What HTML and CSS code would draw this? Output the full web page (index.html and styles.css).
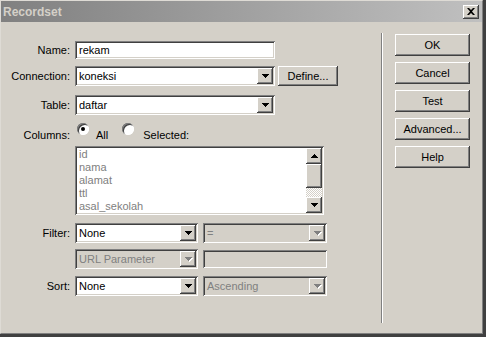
FILE: index.html
```html
<!DOCTYPE html>
<html lang="en">
<head>
  <meta charset="UTF-8" />
  <title>Recordset</title>
  <link rel="stylesheet" href="styles.css">
</head>
<body>
  <div class="window">
    <div class="frame">
      <div class="titlebar">
        <span class="title">Recordset</span>
        <span class="close">
          <svg width="8" height="7" viewBox="0 0 8 7"><path d="M0 0H2L4 2L6 0H8L5 3.5L8 7H6L4 5L2 7H0L3 3.5Z" fill="#000"/></svg>
        </span>
      </div>

      <div class="content">
        <div class="form">
          <div class="row row-name">
            <span class="label">Name:</span>
            <div class="field w-wide"><span class="value">rekam</span></div>
          </div>

          <div class="row row-conn">
            <span class="label">Connection:</span>
            <div class="combo w-wide">
              <span class="value">koneksi</span>
              <span class="drop"><svg width="7" height="4"><path d="M0 0H7V1H6V2H5V3H4V4H3V3H2V2H1V1H0Z"/></svg></span>
            </div>
            <button class="btn define">Define...</button>
          </div>

          <div class="row row-table">
            <span class="label">Table:</span>
            <div class="combo w-wide">
              <span class="value">daftar</span>
              <span class="drop"><svg width="7" height="4"><path d="M0 0H7V1H6V2H5V3H4V4H3V3H2V2H1V1H0Z"/></svg></span>
            </div>
          </div>

          <div class="row row-columns">
            <span class="label">Columns:</span>
            <span class="radio checked"></span>
            <span class="radio-text text-all">All</span>
            <span class="radio"></span>
            <span class="radio-text">Selected:</span>
          </div>

          <div class="row row-list">
            <span class="label"></span>
            <div class="listbox">
              <div class="list-items">
                <div>id</div>
                <div>nama</div>
                <div>alamat</div>
                <div>ttl</div>
                <div>asal_sekolah</div>
              </div>
              <div class="scrollbar">
                <span class="sb-btn"><svg width="7" height="4"><path d="M3 0H4V1H5V2H6V3H7V4H0V3H1V2H2V1H3Z"/></svg></span>
                <span class="sb-thumb"></span>
                <span class="sb-track"></span>
                <span class="sb-btn"><svg width="7" height="4"><path d="M0 0H7V1H6V2H5V3H4V4H3V3H2V2H1V1H0Z"/></svg></span>
              </div>
            </div>
          </div>

          <div class="row row-filter">
            <span class="label">Filter:</span>
            <div class="combo w-half">
              <span class="value">None</span>
              <span class="drop"><svg width="7" height="4"><path d="M0 0H7V1H6V2H5V3H4V4H3V3H2V2H1V1H0Z"/></svg></span>
            </div>
            <div class="combo w-half2 disabled">
              <span class="value">=</span>
              <span class="drop"><svg width="8" height="5"><path class="hl" d="M1 1H8V2H7V3H6V4H5V5H4V4H3V3H2V2H1Z"/><path d="M0 0H7V1H6V2H5V3H4V4H3V3H2V2H1V1H0Z"/></svg></span>
            </div>
          </div>

          <div class="row row-param">
            <span class="label"></span>
            <div class="combo w-half disabled">
              <span class="value">URL Parameter</span>
              <span class="drop"><svg width="8" height="5"><path class="hl" d="M1 1H8V2H7V3H6V4H5V5H4V4H3V3H2V2H1Z"/><path d="M0 0H7V1H6V2H5V3H4V4H3V3H2V2H1V1H0Z"/></svg></span>
            </div>
            <div class="field w-half2 disabled"><span class="value"></span></div>
          </div>

          <div class="row row-sort">
            <span class="label">Sort:</span>
            <div class="combo w-half">
              <span class="value">None</span>
              <span class="drop"><svg width="7" height="4"><path d="M0 0H7V1H6V2H5V3H4V4H3V3H2V2H1V1H0Z"/></svg></span>
            </div>
            <div class="combo w-half2 disabled">
              <span class="value">Ascending</span>
              <span class="drop"><svg width="8" height="5"><path class="hl" d="M1 1H8V2H7V3H6V4H5V5H4V4H3V3H2V2H1Z"/><path d="M0 0H7V1H6V2H5V3H4V4H3V3H2V2H1V1H0Z"/></svg></span>
            </div>
          </div>
        </div>

        <div class="divider"></div>

        <div class="actions">
          <button class="btn">OK</button>
          <button class="btn">Cancel</button>
          <button class="btn">Test</button>
          <button class="btn">Advanced...</button>
          <button class="btn">Help</button>
        </div>
      </div>
    </div>
  </div>
</body>
</html>
```

FILE: styles.css
```css
body {
  margin: 0;
  font-family: "Liberation Sans", Arial, sans-serif;
  font-size: 11px;
  color: #000;
  background: #fff;
}

.window {
  width: 486px;
  height: 337px;
  box-sizing: border-box;
  border-right: 3px solid #404040;
  border-bottom: 3px solid #404040;
  background: #d4d0c8;
}

.frame {
  height: 100%;
  box-sizing: border-box;
  border-top: 1px solid #dedbd5;
  border-left: 1px solid #dedbd5;
  border-right: 1px solid #808080;
  border-bottom: 1px solid #808080;
  display: flex;
  flex-direction: column;
}

/* title bar */
.titlebar {
  height: 21px;
  flex-shrink: 0;
  display: flex;
  align-items: center;
  justify-content: space-between;
  padding: 0 3px 0 2px;
  background: linear-gradient(to right, #808080, #c0c0c0);
}

.title {
  font-weight: bold;
  font-size: 12px;
  color: #d4d0c8;
}

.close {
  width: 16px;
  height: 14px;
  display: flex;
  align-items: center;
  justify-content: center;
  background: #d4d0c8;
  box-shadow: inset -1px -1px #404040, inset 1px 1px #fff, inset -2px -2px #808080;
}

/* body */
.content {
  flex: 1;
  display: flex;
}

.form {
  width: 380px;
  padding-top: 19px;
}

.row {
  display: flex;
  align-items: center;
}

.label {
  width: 69px;
  margin-right: 5px;
  text-align: right;
  flex-shrink: 0;
}

.row-conn { margin-top: 7px; }
.row-table { margin-top: 9px; }
.row-columns { margin-top: 8px; height: 17px; align-items: flex-start; }
.row-list { margin-top: 6px; align-items: flex-start; }
.row-filter { margin-top: 8px; }
.row-param { margin-top: 6px; }
.row-sort { margin-top: 7px; }

.row-columns .label,
.row-columns .radio-text {
  padding-top: 6px;
  line-height: 13px;
}

/* sunken controls */
.field,
.combo,
.listbox {
  box-sizing: border-box;
  background: #fff;
  padding: 2px;
  display: flex;
  align-items: center;
  box-shadow: inset 1px 1px #808080, inset -1px -1px #fff, inset 2px 2px #404040, inset -2px -2px #d4d0c8;
}

.field { height: 18px; }
.combo { height: 20px; }

.value {
  flex: 1;
  padding-left: 2px;
  white-space: nowrap;
  overflow: hidden;
}

.w-wide { width: 200px; }
.w-half { width: 123px; margin-right: 5px; }
.w-half2 { width: 124px; }

.drop {
  width: 16px;
  height: 16px;
  flex-shrink: 0;
  display: flex;
  align-items: center;
  justify-content: center;
  background: #d4d0c8;
  box-shadow: inset -1px -1px #404040, inset 1px 1px #fff, inset -2px -2px #808080;
}

.drop svg,
.sb-btn svg {
  fill: #000;
}

.disabled {
  background: #d4d0c8;
  color: #808080;
}

.disabled .drop svg { fill: #808080; margin: 1px 0 0 1px; }
.disabled .drop svg .hl { fill: #fff; }

/* radios */
.radio {
  width: 12px;
  height: 12px;
  border-radius: 50%;
  background: #fff;
  position: relative;
  flex-shrink: 0;
  margin-left: 2px;
  box-shadow: inset 1px 1px #808080, inset -1px -1px #fff, inset 2px 2px #404040;
}

.radio.checked::after {
  content: "";
  position: absolute;
  left: 4px;
  top: 4px;
  width: 4px;
  height: 4px;
  border-radius: 50%;
  background: #000;
}

.radio-text {
  margin-left: 7px;
}

.text-all {
  margin-right: 12px;
}

.radio + .radio-text:last-child {
  margin-left: 9px;
}

/* listbox */
.listbox {
  width: 249px;
  height: 69px;
  align-items: stretch;
}

.list-items {
  flex: 1;
  padding-left: 2px;
  line-height: 13px;
  color: #808080;
  overflow: hidden;
}

.scrollbar {
  width: 16px;
  display: flex;
  flex-direction: column;
}

.sb-btn,
.sb-thumb {
  width: 16px;
  display: flex;
  align-items: center;
  justify-content: center;
  background: #d4d0c8;
  box-shadow: inset -1px -1px #404040, inset 1px 1px #fff, inset -2px -2px #808080;
}

.sb-btn { height: 16px; }
.sb-thumb { height: 24px; }

.sb-track {
  flex: 1;
  background: repeating-conic-gradient(#fff 0 25%, #d4d0c8 0 50%) 0 0 / 2px 2px;
}

/* buttons */
.btn {
  font: inherit;
  color: #000;
  border: 0;
  padding: 0;
  background: #d4d0c8;
  box-shadow: inset -1px -1px #404040, inset 1px 1px #fff, inset -2px -2px #808080;
}

.define {
  width: 60px;
  height: 20px;
  margin-left: 3px;
}

.divider {
  margin-top: 11px;
  height: 290px;
  border-left: 1px solid #808080;
  border-right: 1px solid #fff;
}

.actions {
  padding: 12px 0 0 12px;
  display: flex;
  flex-direction: column;
  gap: 6px;
}

.actions .btn {
  width: 75px;
  height: 22px;
}
```
